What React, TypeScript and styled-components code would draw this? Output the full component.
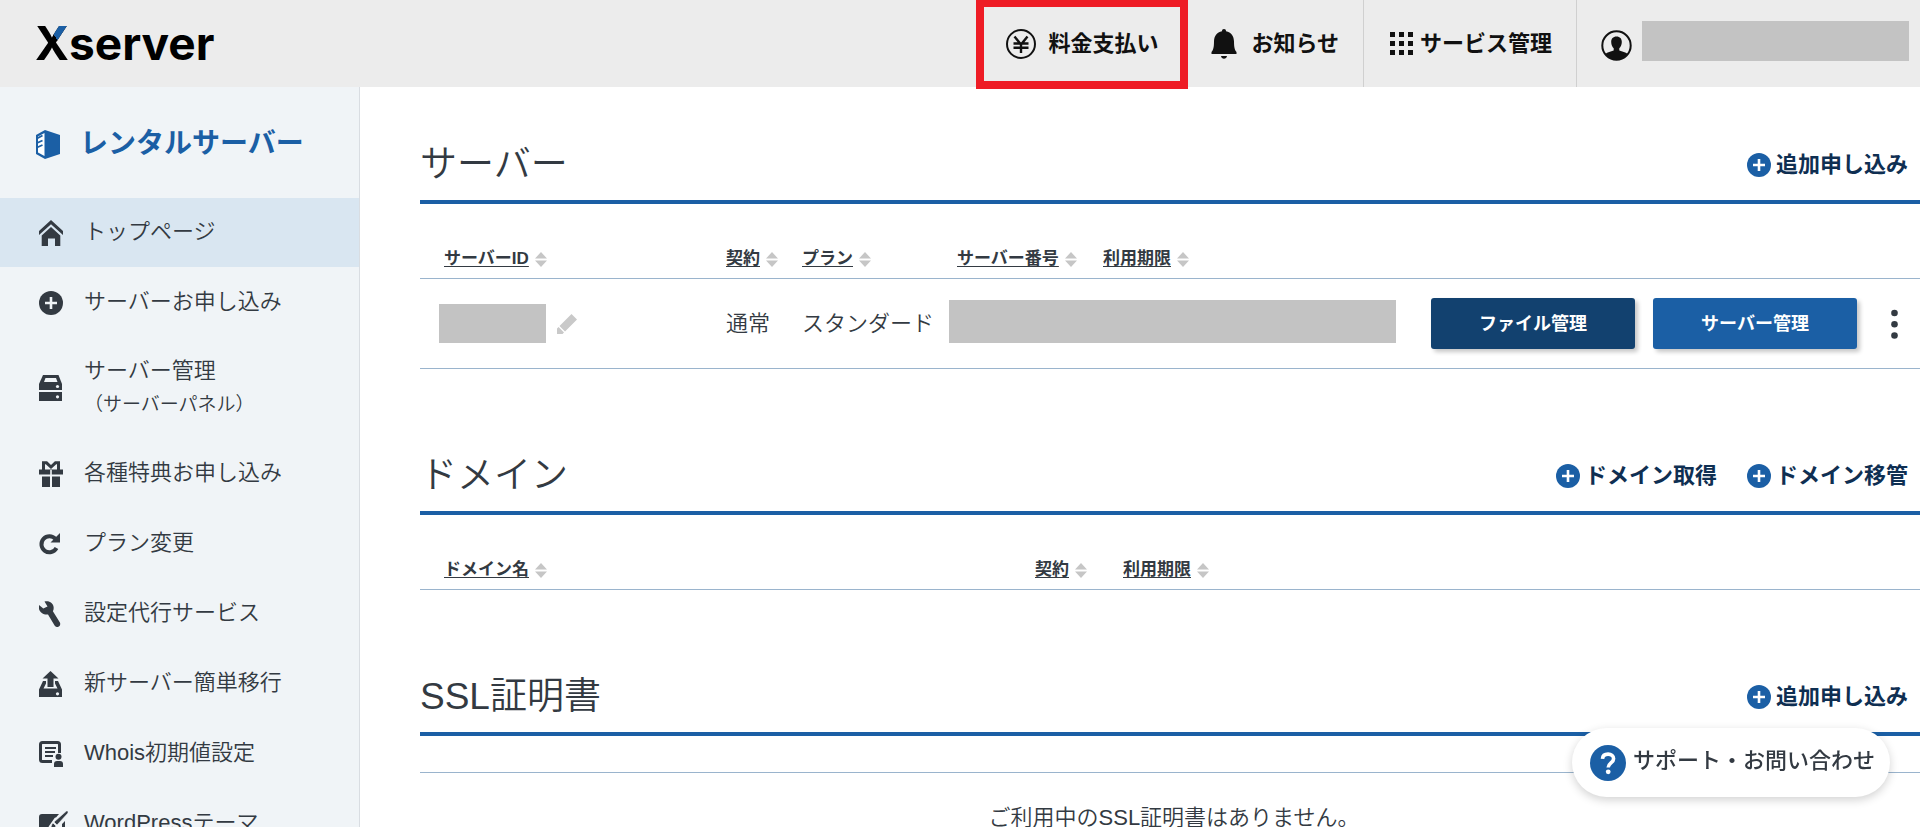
import React from "react";
import styled, { createGlobalStyle } from "styled-components";

const color = {
  text: "#333a42",
  blue: "#1b5fa5",
  navy: "#12416f",
  link: "#0f2f52",
  line: "#9ab4cd",
  mask: "#c3c3c3",
  side: "#f0f4f7",
};

const GlobalStyle = createGlobalStyle`
  *, *::before, *::after { box-sizing: border-box; }
  body {
    margin: 0;
    background: #fff;
    color: ${color.text};
    font-family: "Liberation Sans", "Noto Sans CJK JP", sans-serif;
    font-size: 22px;
    line-height: 34px;
  }
  a { color: inherit; text-decoration: none; }
  button { font: inherit; color: inherit; border: 0; padding: 0; background: none; cursor: pointer; }
  svg { display: block; flex: none; }
`;

const Page = styled.div`
  display: flex;
  flex-direction: column;
  min-height: 100vh;
`;

/* ---------- header ---------- */

const Header = styled.header`
  display: flex;
  justify-content: space-between;
  height: 87px;
  padding-left: 35px;
  background: #ececec;
  color: #111;
`;

const Logo = styled.a`
  align-self: center;
  padding-bottom: 1px;
  font-family: Inter, sans-serif;
  font-weight: 700;
  font-size: 46px;
  line-height: 54px;
  color: #000;
`;

const LogoX = styled.span`
  display: inline-block;
  color: transparent;
  background:
    linear-gradient(56deg, #000 18%, ${color.blue} 18%) right top / 50% 25px no-repeat,
    #000;
  background-clip: text;
  -webkit-background-clip: text;
`;

const HeaderNav = styled.nav`
  display: flex;
`;

const HeaderLink = styled.a<{ $gap?: number; $marked?: boolean }>`
  position: relative;
  display: flex;
  align-items: center;
  gap: ${(p) => p.$gap ?? 12}px;
  padding: 0 24px 0 26px;
  border-right: 1px solid #d0d0d0;
  font-weight: 700;
  white-space: nowrap;
  ${(p) =>
    p.$marked &&
    `&::after {
      content: "";
      position: absolute;
      inset: 0 -6px -2px -4px;
      border: 8px solid #ee1c25;
      border-top-width: 7px;
      z-index: 1;
    }`}
`;

const Account = styled.div`
  display: flex;
  align-items: center;
  gap: 10px;
  padding: 4px 11px 0 24px;
`;

const Mask = styled.span<{ $w: string; $h: number }>`
  display: block;
  width: ${(p) => p.$w};
  height: ${(p) => p.$h}px;
  background: ${color.mask};
`;

const AccountMask = styled(Mask)`
  margin-bottom: 10px;
`;

/* ---------- sidebar ---------- */

const Body = styled.div`
  display: flex;
  flex: 1;
`;

const Sidebar = styled.aside`
  flex: none;
  width: 360px;
  border-right: 1px solid #d9dde2;
  background: ${color.side};
`;

const Service = styled.h1`
  display: flex;
  align-items: center;
  gap: 20px;
  height: 111px;
  margin: 0;
  padding: 3px 0 0 36px;
  font-size: 28px;
  line-height: 40px;
  font-weight: 700;
  color: ${color.blue};
`;

const Menu = styled.ul`
  display: flex;
  flex-direction: column;
  gap: 1px;
  margin: 0;
  padding: 0;
  list-style: none;
`;

const MenuLink = styled.a<{ $active?: boolean }>`
  display: flex;
  align-items: center;
  min-height: 69px;
  gap: 16px;
  padding: 0 10px 0 39px;
  background: ${(p) => (p.$active ? "#d9e6f1" : "transparent")};
  font-weight: 350;
`;

const MenuText = styled.span<{ $double?: boolean }>`
  padding: ${(p) => (p.$double ? "16px 0" : "0 0 2px")};
`;

const MenuNote = styled.small`
  display: block;
  font-size: 19px;
`;

/* ---------- main ---------- */

const Main = styled.main`
  flex: 1;
  min-width: 0;
  padding-left: 60px;
`;

const Section = styled.section`
  margin-bottom: 29px;
`;

const SectionHead = styled.div`
  display: flex;
  justify-content: space-between;
  align-items: center;
  padding: 52px 12px 9px 0;
`;

const Title = styled.h2`
  margin: 0;
  font-size: 37px;
  line-height: 52px;
  font-weight: 350;
`;

const Links = styled.div`
  display: flex;
  gap: 30px;
`;

const AddLink = styled.a`
  display: flex;
  align-items: center;
  gap: 5px;
  color: ${color.link};
  font-weight: 700;
`;

const Table = styled.table`
  width: 100%;
  table-layout: fixed;
  border-collapse: separate;
  border-spacing: 0;
  border-top: 4px solid ${color.blue};
`;

const Col = styled.col<{ $w?: number }>`
  width: ${(p) => (p.$w ? `${p.$w}px` : "auto")};
`;

const Th = styled.th`
  padding: 41px 0 5px 8px;
  border-bottom: 1px solid ${color.line};
  text-align: left;
  font-size: 17px;
  line-height: 28px;
  font-weight: 700;
  white-space: nowrap;
  &:first-child { padding-left: 24px; }
`;

const BlankTh = styled.th`
  height: 37px;
  padding: 0;
  border-bottom: 1px solid ${color.line};
`;

const SortButton = styled.button`
  display: flex;
  align-items: center;
  gap: 6px;
`;

const SortLabel = styled.span`
  text-decoration: underline;
  text-underline-offset: 2px;
`;

const Td = styled.td`
  height: 90px;
  padding: 0 0 0 8px;
  border-bottom: 1px solid ${color.line};
  font-weight: 350;
  white-space: nowrap;
`;

const MaskTd = styled(Td)`
  padding: 0 25px 4px 0;
`;

const IdCell = styled.div`
  display: flex;
  align-items: center;
  gap: 11px;
  padding-left: 11px;
`;

const Actions = styled.div`
  display: flex;
  justify-content: flex-end;
  gap: 18px;
  padding-right: 6px;
`;

const Button = styled.button<{ $bg: string }>`
  width: 204px;
  height: 51px;
  border-radius: 3px;
  background: ${(p) => p.$bg};
  box-shadow: 3px 3px 4px rgba(0, 0, 0, 0.22);
  color: #fff;
  font-size: 18px;
  font-weight: 700;
`;

const Kebab = styled.button`
  display: flex;
  align-items: center;
  justify-content: center;
  width: 39px;
`;

const EmptyTd = styled.td`
  height: 90px;
  padding: 0 0 0 8px;
  text-align: center;
  font-weight: 350;
`;

const Support = styled.button`
  position: fixed;
  right: 30px;
  bottom: 30px;
  display: flex;
  align-items: center;
  gap: 7px;
  height: 69px;
  padding: 0 15px 0 18px;
  border-radius: 35px;
  background: #fff;
  box-shadow: 0 3px 10px rgba(0, 0, 0, 0.18);
  font-weight: 500;
  z-index: 2;
`;

const SupportLabel = styled.span`
  padding-bottom: 4px;
`;

/* ---------- icons ---------- */

const YenIcon = () => (
  <svg width="30" height="30" viewBox="0 0 30 30" fill="none" stroke="#111">
    <circle cx="15" cy="15" r="14" strokeWidth="2" />
    <path d="M8.5 7.5 15 15.5l6.500-8M15 15v9M7.500 14.500h15M7.500 18.800h15" strokeWidth="2.400" />
  </svg>
);

const BellIcon = () => (
  <svg width="30" height="30" viewBox="0 0 30 30" fill="#111">
    <path d="M15 0c1.300 0 2 .9 2 2.200 5.200 1 8 5 8 10.300 0 6 .8 8.800 2.500 10.500v2h-25v-2C4.200 21.300 5 18.500 5 12.500 5 7.200 7.800 3.200 13 2.200 13 .9 13.700 0 15 0zM12 27h6c-.3 1.800-1.500 2.800-3 2.800S12.300 28.800 12 27z" />
  </svg>
);

const GridIcon = () => (
  <svg width="24" height="24" viewBox="0 0 24 24" fill="#111">
    {[0, 9, 18].map((y) => [0, 9, 18].map((x) => <rect key={`${x}-${y}`} x={x} y={y} width="5" height="5" />))}
  </svg>
);

const UserIcon = () => (
  <svg width="31" height="31" viewBox="0 0 31 31">
    <circle cx="15.500" cy="15.500" r="14.200" fill="none" stroke="#111" strokeWidth="2" />
    <path
      fill="#111"
      d="M15.500 6.500c3.500 0 5.300 2.300 5.300 5.500 0 2.700-1.200 5-2.500 6.300v2.200c3 1 6.200 1.600 8.400 3.500-2.500 3.700-6.500 6-11.200 6s-8.700-2.300-11.200-6c2.200-1.900 5.400-2.500 8.400-3.500v-2.200c-1.300-1.300-2.500-3.600-2.500-6.300 0-3.200 1.800-5.500 5.300-5.500z"
    />
  </svg>
);

const ServiceIcon = () => (
  <svg width="24" height="29" viewBox="0 0 24 29">
    <path fill={color.blue} d="M9 0 24 5v19L9 29 0 24V5z" />
    <path fill="#fff" d="M2 6.500 8.500 3v23L2 22.500z" />
    <path d="M1 8.500 6.500 5.500M1 13l5.500-2.500M1 17.500 6.500 15" stroke={color.blue} strokeWidth="1.800" />
  </svg>
);

const PlusIcon = ({ fill, hole }: { fill: string; hole: string }) => (
  <svg width="24" height="24" viewBox="0 0 24 24">
    <circle cx="12" cy="12" r="12" fill={fill} />
    <path d="M12 6v12M6 12h12" stroke={hole} strokeWidth="2.600" />
  </svg>
);

const SortIcon = () => (
  <svg width="12" height="15" viewBox="0 0 12 15" fill="#c6c6c6">
    <path d="M6 0l6 6.500H0zM6 15l6-6.500H0z" />
  </svg>
);

const PencilIcon = () => (
  <svg width="20" height="20" viewBox="0 0 20 20" fill="#c9c9c9">
    <path d="M14.500 0 20 5.500 8 17.500 2.500 12zM1.600 13 7 18.400 5.500 20H0v-5.500z" />
  </svg>
);

const KebabIcon = () => (
  <svg width="7" height="30" viewBox="0 0 7 30" fill={color.text}>
    <circle cx="3.500" cy="4" r="3.300" />
    <circle cx="3.500" cy="15.300" r="3.300" />
    <circle cx="3.500" cy="26.500" r="3.300" />
  </svg>
);

const HelpIcon = () => (
  <svg width="36" height="36" viewBox="0 0 36 36">
    <circle cx="18" cy="18" r="18" fill={color.blue} />
    <path d="M12.500 13.800c.2-3 2.500-4.700 5.600-4.700 3.200 0 5.500 1.900 5.500 4.600 0 4.300-5.400 4.300-5.400 8.900" fill="none" stroke="#fff" strokeWidth="3.600" />
    <circle cx="18.200" cy="26.800" r="2.400" fill="#fff" />
  </svg>
);

const menuShapes: Record<string, React.ReactNode> = {
  home: (
    <>
      <path d="M12 0 24 11v4L12 4.200 0 15v-4z" />
      <path d="M12 7l9.300 8.500V26H16v-7.500H9V26H2.700V15.500z" />
    </>
  ),
  plus: (
    <>
      <circle cx="12" cy="13" r="12" />
      <path d="M12 7v12M6 13h12" stroke={color.side} strokeWidth="2.600" />
    </>
  ),
  server: (
    <>
      <path d="M4 0h15.500L23 9v6H0V9z" />
      <path d="M6.500 3H17l1.500 4H5z" fill={color.side} />
      <path d="M0 17h23v9H0z" />
      <circle cx="18.500" cy="11.500" r="1.600" fill={color.side} />
      <circle cx="18.500" cy="21.800" r="1.600" fill={color.side} />
    </>
  ),
  gift: (
    <>
      <path d="M0 8.500h24v5H0zM3 15.500h8V26H3zM13 15.500h8V26h-8z" />
      <path d="M4.500 9V1.800h3L12 6l4.500-4.200h3V9" fill="none" stroke={color.text} strokeWidth="3" />
      <path d="M11.200 9h1.600v17h-1.600z" fill={color.side} />
    </>
  ),
  reload: (
    <>
      <path d="M16.500 8A8 8 0 1 0 17.500 17" fill="none" stroke={color.text} strokeWidth="4" />
      <path d="M21 2v9.500h-9.500z" />
    </>
  ),
  wrench: (
    <path d="M5.500.5c4.500-1.300 9 1.500 9.200 6.200 0 1.500-.3 2.600-.8 3.600l7 11.200c.8 1.600.1 3.500-1.500 4.200-1.500.7-3 .2-3.800-1.200L9 13.500c-4 .6-8-1.700-9-5.500V4l4.300 3.500 4.200-2z" />
  ),
  upload: (
    <>
      <path d="M4 10h3v2.500L4.500 17.500h14L16 12.500V10h3l4 8.500V26H0v-7.500z" />
      <path d="M11.500 0 19.500 7.500h-5V16h-6V7.500h-5z" />
      <circle cx="18.500" cy="22.800" r="1.600" fill={color.side} />
    </>
  ),
  whois: (
    <>
      <path d="M13 20.500H3.500q-2 0-2-2v-15q0-2 2-2h15q2 0 2 2V12" fill="none" stroke={color.text} strokeWidth="3" />
      <path d="M6 7h11M6 11h10M6 15h8" stroke={color.text} strokeWidth="2" />
      <circle cx="19.500" cy="15.800" r="3" />
      <path d="M15 26v-3q0-3 3-3h3q3 0 3 3v3z" />
    </>
  ),
  theme: (
    <>
      <path d="M3 3h17l-3 3.500H3V22h20v-9l3-3v16H0V6q0-3 3-3z" />
      <path d="M2 5h15L10 15l-3 6H2z" />
      <path d="M27.500 0H29v2L18 14l-3-3zM14 12l3 3c-1 2.500-3.500 3-6 2.500 1.500-1 1.200-4 3-5.500z" stroke={color.side} strokeWidth="0.600" />
    </>
  ),
};

const MenuIcon = ({ name }: { name: string }) => (
  <svg width="29" height="26" viewBox="0 0 29 26" fill={color.text}>
    {menuShapes[name]}
  </svg>
);

/* ---------- data ---------- */

const menu = [
  { icon: "home", label: "トップページ", active: true },
  { icon: "plus", label: "サーバーお申し込み" },
  { icon: "server", label: "サーバー管理", note: "（サーバーパネル）" },
  { icon: "gift", label: "各種特典お申し込み" },
  { icon: "reload", label: "プラン変更" },
  { icon: "wrench", label: "設定代行サービス" },
  { icon: "upload", label: "新サーバー簡単移行" },
  { icon: "whois", label: "Whois初期値設定" },
  { icon: "theme", label: "WordPressテーマ" },
];

const SectionHeader = ({ title, links }: { title: string; links: string[] }) => (
  <SectionHead>
    <Title>{title}</Title>
    <Links>
      {links.map((l) => (
        <AddLink key={l} href="#">
          <PlusIcon fill={color.blue} hole="#fff" />
          {l}
        </AddLink>
      ))}
    </Links>
  </SectionHead>
);

const SortTh = ({ label }: { label: string }) => (
  <Th scope="col">
    <SortButton>
      <SortLabel>{label}</SortLabel>
      <SortIcon />
    </SortButton>
  </Th>
);

export default function App() {
  return (
    <Page>
      <GlobalStyle />
      <Header>
        <Logo href="#">
          <LogoX>X</LogoX>server
        </Logo>
        <HeaderNav>
          <HeaderLink href="#" $marked>
            <YenIcon />
            料金支払い
          </HeaderLink>
          <HeaderLink href="#">
            <BellIcon />
            お知らせ
          </HeaderLink>
          <HeaderLink href="#" $gap={6}>
            <GridIcon />
            サービス管理
          </HeaderLink>
          <Account>
            <UserIcon />
            <AccountMask $w="267px" $h={40} />
          </Account>
        </HeaderNav>
      </Header>
      <Body>
        <Sidebar>
          <Service>
            <ServiceIcon />
            レンタルサーバー
          </Service>
          <Menu>
            {menu.map((m) => (
              <li key={m.label}>
                <MenuLink href="#" $active={m.active}>
                  <MenuIcon name={m.icon} />
                  <MenuText $double={!!m.note}>
                    {m.label}
                    {m.note && <MenuNote>{m.note}</MenuNote>}
                  </MenuText>
                </MenuLink>
              </li>
            ))}
          </Menu>
        </Sidebar>
        <Main>
          <Section>
            <SectionHeader title="サーバー" links={["追加申し込み"]} />
            <Table>
              <colgroup>
                <Col $w={298} />
                <Col $w={76} />
                <Col $w={155} />
                <Col $w={146} />
                <Col />
                <Col $w={499} />
              </colgroup>
              <thead>
                <tr>
                  <SortTh label="サーバーID" />
                  <SortTh label="契約" />
                  <SortTh label="プラン" />
                  <SortTh label="サーバー番号" />
                  <SortTh label="利用期限" />
                  <Th />
                </tr>
              </thead>
              <tbody>
                <tr>
                  <Td>
                    <IdCell>
                      <Mask $w="107px" $h={39} />
                      <button aria-label="編集">
                        <PencilIcon />
                      </button>
                    </IdCell>
                  </Td>
                  <Td>通常</Td>
                  <Td>スタンダード</Td>
                  <MaskTd colSpan={2}>
                    <Mask $w="100%" $h={43} />
                  </MaskTd>
                  <Td>
                    <Actions>
                      <Button $bg={color.navy}>ファイル管理</Button>
                      <Button $bg={color.blue}>サーバー管理</Button>
                      <Kebab aria-label="メニュー">
                        <KebabIcon />
                      </Kebab>
                    </Actions>
                  </Td>
                </tr>
              </tbody>
            </Table>
          </Section>
          <Section>
            <SectionHeader title="ドメイン" links={["ドメイン取得", "ドメイン移管"]} />
            <Table>
              <colgroup>
                <Col $w={607} />
                <Col $w={88} />
                <Col />
              </colgroup>
              <thead>
                <tr>
                  <SortTh label="ドメイン名" />
                  <SortTh label="契約" />
                  <SortTh label="利用期限" />
                </tr>
              </thead>
            </Table>
          </Section>
          <Section>
            <SectionHeader title="SSL証明書" links={["追加申し込み"]} />
            <Table>
              <thead>
                <tr>
                  <BlankTh />
                </tr>
              </thead>
              <tbody>
                <tr>
                  <EmptyTd>ご利用中のSSL証明書はありません。</EmptyTd>
                </tr>
              </tbody>
            </Table>
          </Section>
        </Main>
      </Body>
      <Support>
        <HelpIcon />
        <SupportLabel>サポート・お問い合わせ</SupportLabel>
      </Support>
    </Page>
  );
}
